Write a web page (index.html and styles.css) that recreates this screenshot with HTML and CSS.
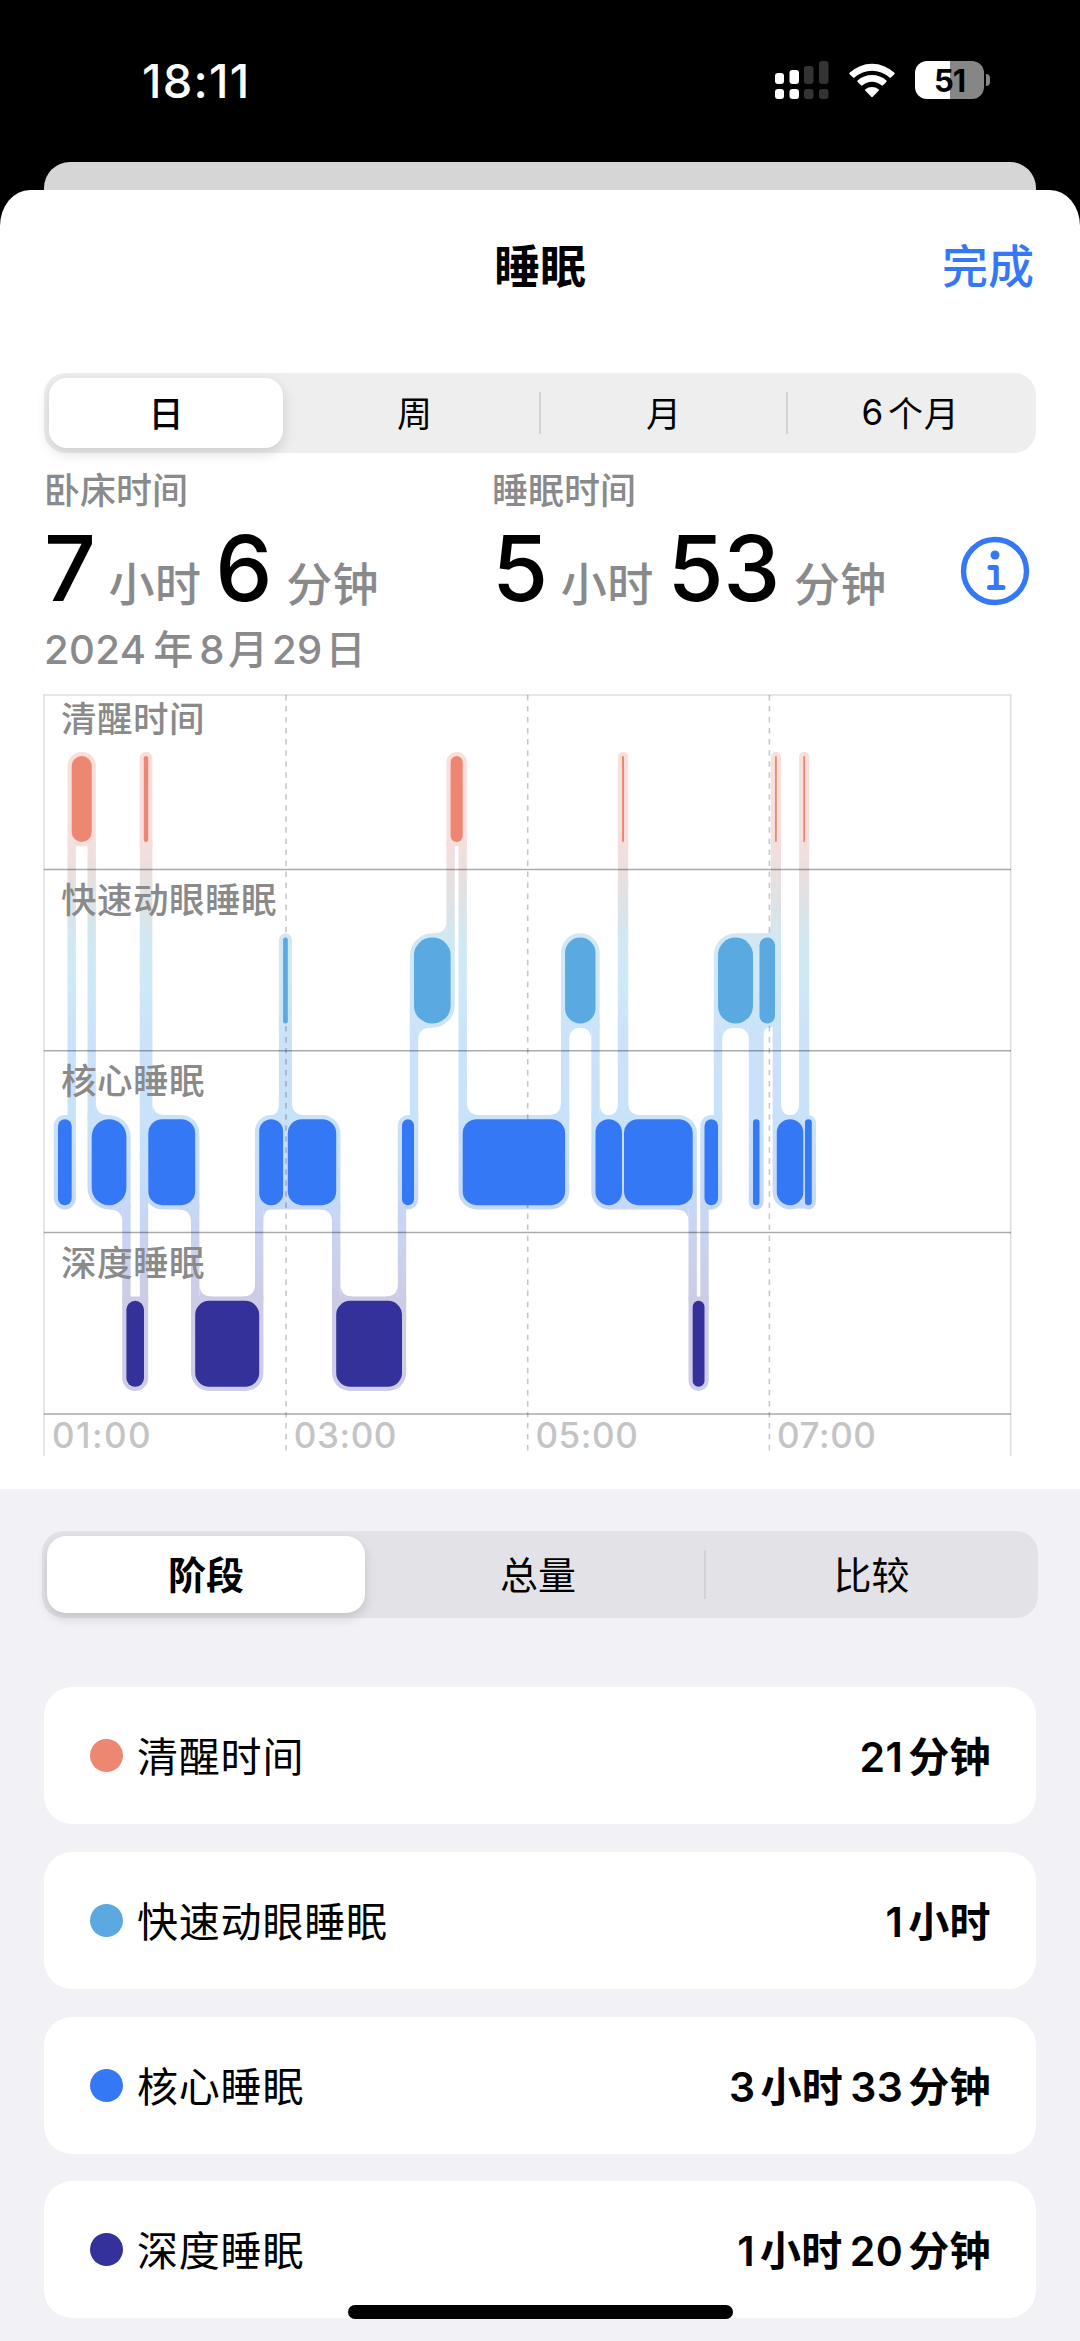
FILE: index.html
```html
<!DOCTYPE html>
<html lang="zh-CN">
<head>
<meta charset="utf-8">
<title>睡眠</title>
<link rel="stylesheet" href="styles.css">
</head>
<body>
<header class="status">
  <span class="clock">18:11</span>
  <div class="status-icons">
    <svg class="signal" width="54" height="38" viewBox="0 0 54 38">
      <g fill="#fff"><rect x="0" y="12" width="9" height="11" rx="3"/><rect x="14.500" y="9" width="9.500" height="14" rx="3"/><rect x="0" y="28" width="9" height="10" rx="3"/><rect x="14.500" y="28" width="9.500" height="10" rx="3"/></g>
      <g fill="#333"><rect x="29" y="5" width="9.500" height="18" rx="3"/><rect x="44" y="0" width="9.500" height="23" rx="3"/><rect x="29" y="28" width="9.500" height="10" rx="3"/><rect x="44" y="28" width="9.500" height="10" rx="3"/></g>
    </svg>
    <svg class="wifi" width="46" height="35" viewBox="0 0 46 35" fill="#fff">
      <path d="M0.600 9.800 A32.500 32.500 0 0 1 45.400 9.800 Q46 10.600 45.300 11.300 L42 14.500 Q41.200 15.200 40.400 14.500 A25.500 25.500 0 0 0 5.600 14.500 Q4.800 15.200 4 14.500 L0.700 11.300 Q0 10.600 0.600 9.800Z"/>
      <path d="M8.600 17.600 A21.500 21.500 0 0 1 37.400 17.600 Q38 18.400 37.300 19.100 L34 22.300 Q33.200 23 32.400 22.300 A14 14 0 0 0 13.600 22.300 Q12.800 23 12 22.300 L8.700 19.100 Q8 18.400 8.600 17.600Z"/>
      <path d="M16.400 26.300 A10.500 10.500 0 0 1 29.600 26.300 Q30.300 27 29.600 27.700 L23.800 33.800 Q23 34.500 22.200 33.800 L16.400 27.700 Q15.700 27 16.400 26.300Z"/>
    </svg>
    <div class="battery"><span class="battery-body">51</span><span class="battery-nub"></span></div>
  </div>
</header>
<div class="backsheet"></div>
<main class="sheet">
  <nav class="titlebar"><span></span><h1>睡眠</h1><a class="done">完成</a></nav>
  <section class="top">
    <div class="seg seg-range">
      <span class="opt on">日</span><span class="opt">周</span><span class="opt line">月</span><span class="opt line"><i>6</i>个月</span>
    </div>
    <div class="totals">
      <div class="total">
        <div class="label">卧床时间</div>
        <div class="value"><b>7</b><span class="unit">小时</span><b class="next">6</b><span class="unit">分钟</span></div>
      </div>
      <div class="total total-sleep">
        <div class="label">睡眠时间</div>
        <div class="value"><b>5</b><span class="unit">小时</span><b class="next">53</b><span class="unit">分钟</span></div>
      </div>
      <svg class="info" width="70" height="70" viewBox="0 0 70 70" fill="none" stroke="#3478f6" stroke-linecap="round" stroke-linejoin="round">
        <circle cx="35" cy="35" r="31.500" stroke-width="5.400"/>
        <circle cx="35" cy="19" r="4.500" fill="#3478f6" stroke="none"/>
        <path d="M30 31.500 H36.300 V51.500 M29.500 51.500 H43" stroke-width="5"/>
      </svg>
    </div>
    <div class="date"><i>2024</i>年<i>8</i>月<i>29</i>日</div>
    <svg class="chart" id="chart" width="1080" height="780" viewBox="0 685 1080 780">
      <defs>
        <linearGradient id="halo" gradientUnits="userSpaceOnUse" x1="0" y1="750" x2="0" y2="1391">
          <stop offset="0" stop-color="#fadfda"/>
          <stop offset=".13" stop-color="#f8dfdc"/>
          <stop offset=".2" stop-color="#e8dfe0"/>
          <stop offset=".25" stop-color="#dbe3e8"/>
          <stop offset=".3" stop-color="#d0e8f3"/>
          <stop offset=".36" stop-color="#cde9f7"/>
          <stop offset=".45" stop-color="#cbe2f9"/>
          <stop offset=".58" stop-color="#c8e2f9"/>
          <stop offset=".68" stop-color="#c5dbf9"/>
          <stop offset=".76" stop-color="#c8d3f1"/>
          <stop offset=".85" stop-color="#cdcce7"/>
          <stop offset="1" stop-color="#cecde8"/>
        </linearGradient>
      </defs>
      <g id="halos" fill="url(#halo)"></g>
      <g fill="none" stroke="#000" stroke-width="1.600">
        <path stroke-opacity=".13" d="M44 1456 V695 H1010.700 V1456"/>
        <path stroke-opacity=".22" stroke-dasharray="5.500 5.530" d="M286 695 V1456 M527.700 695 V1456 M769.400 695 V1456"/>
        <path stroke-opacity=".33" stroke-width="1.500" d="M44 869.400 H1011 M44 1050.800 H1011 M44 1232.400 H1011 M44 1414 H1011"/>
      </g>
      <g class="rows">
        <text x="61" y="731.500">清醒时间</text>
        <text x="61" y="913">快速动眼睡眠</text>
        <text x="61" y="1094">核心睡眠</text>
        <text x="61" y="1276">深度睡眠</text>
      </g>
      <g id="bars"></g>
      <g class="hours">
        <text x="52" y="1448" letter-spacing="1.400">01:00</text>
        <text x="293.700" y="1448">03:00</text>
        <text x="535.400" y="1448">05:00</text>
        <text x="777" y="1448">07:00</text>
      </g>
    </svg>
  </section>
  <section class="detail">
    <div class="seg seg-mode">
      <span class="opt on">阶段</span><span class="opt">总量</span><span class="opt line">比较</span>
    </div>
    <div class="cards">
      <div class="card"><span class="dot awake"></span><span class="name">清醒时间</span><span class="sum"><i>21</i>分钟</span></div>
      <div class="card"><span class="dot rem"></span><span class="name">快速动眼睡眠</span><span class="sum"><i>1</i>小时</span></div>
      <div class="card"><span class="dot core"></span><span class="name">核心睡眠</span><span class="sum"><i>3</i>小时<i>33</i>分钟</span></div>
      <div class="card"><span class="dot deep"></span><span class="name">深度睡眠</span><span class="sum"><i>1</i>小时<i>20</i>分钟</span></div>
    </div>
  </section>
</main>
<div class="home"></div>
<script src="chart.js"></script>
</body>
</html>
```
FILE: styles.css
```css
* { box-sizing: border-box; }
body {
  margin: 0;
  width: 1080px;
  height: 2341px;
  overflow: hidden;
  background: #000;
  color: #000;
  font-family: Inter, "Noto Sans CJK SC", sans-serif;
  position: relative;
}
i { font-style: normal; }

.status {
  height: 162px;
  padding: 0 90px 0 142px;
  display: flex;
  justify-content: space-between;
  align-items: flex-start;
  color: #fff;
}
.clock { font-size: 47px; font-weight: 500; line-height: 56px; margin-top: 53px; letter-spacing: 1.200px; }
.status-icons { display: flex; align-items: center; margin-top: 61px; height: 38px; }
.wifi { margin-left: 20px; }
.battery { display: flex; align-items: center; gap: 2px; margin-left: 20px; }
.battery-body {
  width: 69px; height: 38px; border-radius: 12px;
  background: linear-gradient(90deg, #fff 50.500%, #868686 50.500%);
  color: #000; font-size: 31px; font-weight: 700; line-height: 39px; text-align: center;
  letter-spacing: -1px;
}
.battery-nub { width: 4px; height: 12px; border-radius: 0 4px 4px 0; background: #868686; }

.backsheet { height: 28px; margin: 0 44px; background: #d6d6d6; border-radius: 26px 26px 0 0; }
.sheet { background: #fff; border-radius: 30px 30px 0 0 / 36px 36px 0 0; height: 2151px; display: flex; flex-direction: column; }

.titlebar { height: 183px; padding: 0 46px; display: grid; grid-template-columns: 1fr auto 1fr; align-items: start; }
.titlebar h1 { margin: 42px 0 0; font-size: 46px; line-height: 68px; font-weight: 600; }
.done { margin-top: 42px; font-size: 46px; line-height: 68px; font-weight: 500; color: #3478f6; justify-self: end; }

.top { height: 1116px; }
.seg { display: flex; align-items: center; }
.opt { flex: 1; display: flex; align-items: center; justify-content: center; position: relative; padding-bottom: 3px; }
.opt.on { background: #fff; }
.opt.line::before { content: ""; position: absolute; left: -1px; width: 2px; background: #d2d2d6; }
.seg-range {
  margin: 0 44px; height: 80px; border-radius: 22px; background: #eee; padding: 0 0 0 5px; font-size: 35px;
}
.seg-range .opt { height: 70px; }
.seg-range .opt:nth-child(2) { flex: 0 0 257px; padding-left: 6px; }
.seg-range .on { flex: 0 0 234px; border-radius: 18px; font-weight: 500; box-shadow: 0 5px 14px rgba(0,0,0,.14); }
.seg-range .line::before { top: 14px; height: 42px; }
.seg-range i { margin-right: 4px; }
.seg-range .opt:last-child { letter-spacing: .8px; padding-right: 2px; }

.totals { display: flex; margin: 0 44px; height: 163px; }
.total { width: 448px; }
.total-sleep { flex: 1; }
.label { margin-top: 12px; height: 52px; line-height: 52px; font-size: 36px; font-weight: 500; color: #8a8a8c; }
.value { display: flex; align-items: baseline; height: 96px; line-height: 96px; margin-top: 3px; }
.value b { font-size: 91px; font-weight: 500; letter-spacing: -.5px; }
.value b.next { margin-left: 14px; }
.unit { font-size: 46px; font-weight: 500; color: #8a8a8c; margin-left: 13px; letter-spacing: .4px; }
.next + .unit { margin-left: 14px; }
.info { margin: 83px 6px 0 0; }
.date { margin: 6px 44px 0; height: 54px; line-height: 55px; font-size: 40px; font-weight: 500; color: #8a8a8c; }
.date i { letter-spacing: .4px; margin: 0 3px 0 6px; }
.date i:first-child { margin: 0 7px 0 0; }
.date i:last-child { margin-left: 4px; }
.chart { display: block; margin-top: 9px; }
.rows { font-size: 35.500px; font-weight: 500; fill: #8a8a8a; letter-spacing: .5px; }
.hours { font-size: 35px; font-weight: 500; fill: #c4c4c6; letter-spacing: .6px; }

.detail { flex: 1; background: #f1f1f6; padding: 42px 42px 0; }
.seg-mode { height: 87px; border-radius: 22px; background: #e3e2e7; padding: 0 0 0 5px; font-size: 38px; }
.seg-mode .opt { height: 77px; padding-bottom: 4px; }
.seg-mode .opt:nth-child(2) { flex: 0 0 340px; padding-left: 6px; }
.seg-mode .on { flex: 0 0 318px; border-radius: 19px; font-weight: 600; box-shadow: 0 5px 12px rgba(0,0,0,.14); }
.seg-mode .line::before { top: 14px; height: 49px; }
.cards { display: flex; flex-direction: column; gap: 27.800px; padding: 69px 2px 0; }
.card { height: 137px; border-radius: 28px; background: #fff; padding: 0 45px 0 46px; display: flex; align-items: center; font-size: 41px; }
.dot { width: 33px; height: 33px; border-radius: 50%; }
.awake { background: #ee8772; }
.rem { background: #5aa9e0; }
.core { background: #3478f6; }
.deep { background: #35319b; }
.name { margin-left: 14px; flex: 1; letter-spacing: .8px; padding-bottom: 3px; }
.sum { font-weight: 600; letter-spacing: .4px; padding-bottom: 3px; }
.sum i { margin: 0 5px 0 7px; }
.home { position: absolute; left: 348px; top: 2305px; width: 385px; height: 14px; border-radius: 7px; background: #000; }
```
FILE: chart.js
```js
// Night timeline: each entry is [stage, start x, end x] in chart units.
const stages = {
  awake: { y: 756, color: "#ee8772" },
  rem: { y: 937.5, color: "#5aa9e0" },
  core: { y: 1119.2, color: "#3478f6" },
  deep: { y: 1300.8, color: "#35319b" }
};
const night = [
  ["core", 58, 71.7], ["awake", 71.7, 91.7], ["core", 91.7, 126.4], ["deep", 126.4, 144],
  ["awake", 143.8, 148.2], ["core", 148.3, 195.2], ["deep", 195.2, 259.2], ["core", 259.2, 283.1],
  ["rem", 283.1, 287.8], ["core", 287.8, 336.2], ["deep", 336.2, 402], ["core", 402, 414],
  ["rem", 414, 450.6], ["awake", 450.6, 462.7], ["core", 462.7, 565.1], ["rem", 565.1, 595.5],
  ["core", 595.5, 622], ["awake", 622, 624], ["core", 624, 692.7], ["deep", 692.7, 704.5],
  ["core", 704.5, 718], ["rem", 718, 753], ["core", 753, 759.5], ["rem", 759.5, 775],
  ["awake", 775, 776.8], ["core", 776.8, 803.3], ["awake", 803.3, 805], ["core", 805, 811.8]
];
const H = 86, P = 4.2, F = 12.5;
let halo = "", bars = "";
const rect = (x, y, w, h) => `M${x} ${y}h${w}v${h}h${-w}z`;

night.forEach(([s, a, b], i) => {
  const y = stages[s].y, w = b - a;
  const dir = n => n ? Math.sign(stages[n[0]].y - y) : 0;
  const left = dir(night[i - 1]), right = dir(night[i + 1]);
  const r = w < 39 ? w / 2 : 14;
  const R = Math.min(r + P, w / 2 + P);
  const x0 = a - P, x1 = b + P, y0 = y - P, y1 = y + H + P;
  const tl = left < 0 ? 0 : R, bl = left > 0 ? 0 : R, tr = right < 0 ? 0 : R, br = right > 0 ? 0 : R;
  halo += `<path d="M${x0 + tl} ${y0}H${x1 - tr}A${tr} ${tr} 0 0 1 ${x1} ${y0 + tr}V${y1 - br}A${br} ${br} 0 0 1 ${x1 - br} ${y1}`
    + `H${x0 + bl}A${bl} ${bl} 0 0 1 ${x0} ${y1 - bl}V${y0 + tl}A${tl} ${tl} 0 0 1 ${x0 + tl} ${y0}z"/>`;
  if (right) {
    const y2 = stages[night[i + 1][0]].y;
    halo += `<path d="${rect(b - P, Math.min(y, y2) + H, P * 2, Math.abs(y2 - y) - H)}"/>`;
  }
  // Concave corners where a connector leaves a wide bar.
  const fillet = (x, sx, up) => {
    const other = sx > 0 ? right : left;
    const both = other === (up ? -1 : 1);
    if (w < 15 || s === "awake" || (s === "deep" && w < 24)) return;
    const rx = Math.min(F, both ? (w - 2 * P) / 2 : w / 2 - P);
    const e = up ? y0 : y1, v = up ? -1 : 1;
    halo += `<path d="M${x} ${e - v}V${e + v * F}Q${x} ${e} ${x + sx * rx} ${e}V${e - v}z"/>`;
  };
  if (left) fillet(a + P, 1, left < 0);
  if (right) fillet(b - P, -1, right < 0);
  bars += `<rect x="${a}" y="${y}" width="${w}" height="${H}" rx="${r}" ry="${Math.min(r, 17.5)}" fill="${stages[s].color}"/>`;
});
// Neighbouring bars of one stage split by a brief interruption share an edge.
const bridges = rect(272, 1200, 28, 9.4) + rect(608, 1200, 28, 9.4) + rect(790, 1200, 18, 8.4) + rect(738, 933.3, 30, 20) + rect(749, 950, 14.4, 80);

document.getElementById("halos").innerHTML = `${halo}<path d="${bridges}"/>`;
document.getElementById("bars").innerHTML = bars;
```
